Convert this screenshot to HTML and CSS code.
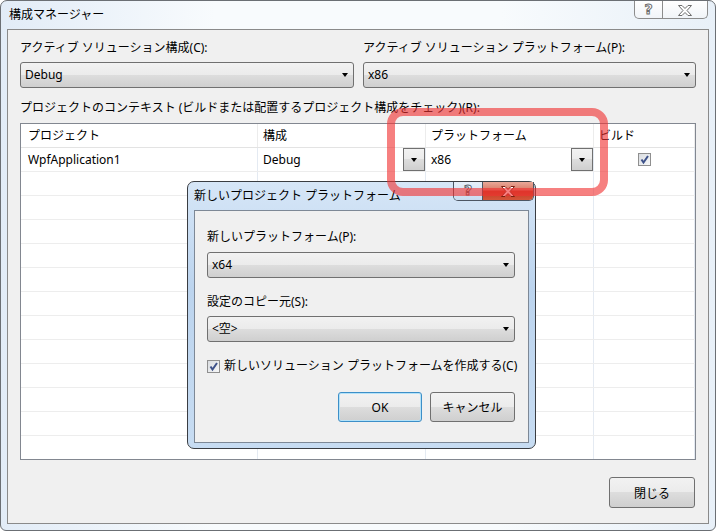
FILE: index.html
```html
<!DOCTYPE html>
<html lang="ja">
<head>
    <meta charset="UTF-8">
    <title>構成マネージャー</title>
    <link rel="stylesheet" href="styles.css">
</head>
<body>
    <div class="window">
        <div class="titlebar">
            <span class="title">構成マネージャー</span>
            <div class="caption">
                <div class="cap-help">?</div>
                <div class="cap-close">
                    <svg width="14" height="11" viewBox="0 0 14 11"><polygon points="0.5,0.5 4,0.5 7,3.5 10,0.5 13.5,0.5 9,5.5 13.5,10.5 10,10.5 7,7.5 4,10.5 0.5,10.5 5,5.5" fill="#fff" stroke="#6d6d6d" stroke-width="1"/></svg>
                </div>
            </div>
        </div>

        <div class="client">
            <div class="top-row">
                <div class="field">
                    <div class="label">アクティブ ソリューション構成(C):</div>
                    <div class="combo">Debug</div>
                </div>
                <div class="field">
                    <div class="label">アクティブ ソリューション プラットフォーム(P):</div>
                    <div class="combo">x86</div>
                </div>
            </div>

            <div class="context-label">プロジェクトのコンテキスト (ビルドまたは配置するプロジェクト構成をチェック)(R):</div>

            <div class="grid">
                <div class="grid-row head">
                    <div class="cell first">プロジェクト</div>
                    <div class="cell">構成</div>
                    <div class="cell">プラットフォーム</div>
                    <div class="cell">ビルド</div>
                </div>
                <div class="grid-row">
                    <div class="cell first">WpfApplication1</div>
                    <div class="cell">Debug<span class="cell-drop"></span></div>
                    <div class="cell">x86<span class="cell-drop"></span></div>
                    <div class="cell center">
                        <span class="check"><svg width="11" height="11" viewBox="0 0 11 11"><path d="M2.5 5.5 L4.5 8.5 L9 2" fill="none" stroke="#3d5189" stroke-width="2"/></svg></span>
                    </div>
                </div>
                <div class="grid-row"><div class="cell first"></div><div class="cell"></div><div class="cell"></div><div class="cell"></div></div>
                <div class="grid-row"><div class="cell first"></div><div class="cell"></div><div class="cell"></div><div class="cell"></div></div>
                <div class="grid-row"><div class="cell first"></div><div class="cell"></div><div class="cell"></div><div class="cell"></div></div>
                <div class="grid-row"><div class="cell first"></div><div class="cell"></div><div class="cell"></div><div class="cell"></div></div>
                <div class="grid-row"><div class="cell first"></div><div class="cell"></div><div class="cell"></div><div class="cell"></div></div>
                <div class="grid-row"><div class="cell first"></div><div class="cell"></div><div class="cell"></div><div class="cell"></div></div>
                <div class="grid-row"><div class="cell first"></div><div class="cell"></div><div class="cell"></div><div class="cell"></div></div>
                <div class="grid-row"><div class="cell first"></div><div class="cell"></div><div class="cell"></div><div class="cell"></div></div>
                <div class="grid-row"><div class="cell first"></div><div class="cell"></div><div class="cell"></div><div class="cell"></div></div>
                <div class="grid-row"><div class="cell first"></div><div class="cell"></div><div class="cell"></div><div class="cell"></div></div>
                <div class="grid-row"><div class="cell first"></div><div class="cell"></div><div class="cell"></div><div class="cell"></div></div>
                <div class="grid-row"><div class="cell first"></div><div class="cell"></div><div class="cell"></div><div class="cell"></div></div>
            </div>

            <div class="footer">
                <button class="btn close-btn">閉じる</button>
            </div>
        </div>

        <div class="dialog">
            <div class="dlg-titlebar">新しいプロジェクト プラットフォーム</div>
            <div class="dlg-caption">
                <div class="dlg-help">?</div>
                <div class="dlg-close">
                    <svg width="14" height="11" viewBox="0 0 14 11"><polygon points="0.5,0.5 4,0.5 7,3.5 10,0.5 13.5,0.5 9,5.5 13.5,10.5 10,10.5 7,7.5 4,10.5 0.5,10.5 5,5.5" fill="#fff" stroke="#7a2010" stroke-width="1"/></svg>
                </div>
            </div>
            <div class="dlg-client">
                <div class="label">新しいプラットフォーム(P):</div>
                <div class="combo">x64</div>
                <div class="label spaced">設定のコピー元(S):</div>
                <div class="combo">&lt;空&gt;</div>
                <div class="check-row">
                    <span class="check"><svg width="11" height="11" viewBox="0 0 11 11"><path d="M2.5 5.5 L4.5 8.5 L9 2" fill="none" stroke="#3d5189" stroke-width="2"/></svg></span>
                    <span>新しいソリューション プラットフォームを作成する(C)</span>
                </div>
                <div class="dlg-buttons">
                    <button class="btn default">OK</button>
                    <button class="btn">キャンセル</button>
                </div>
            </div>
        </div>

        <div class="highlight"></div>
    </div>
</body>
</html>
```

FILE: styles.css
```css
* {
    margin: 0;
    padding: 0;
    box-sizing: border-box;
}

body {
    width: 716px;
    height: 531px;
    overflow: hidden;
    background: #fff;
    font-family: "Noto Sans", "Noto Sans CJK JP", sans-serif;
    font-size: 12px;
    line-height: 16px;
    color: #000;
}

.window {
    position: relative;
    display: flex;
    flex-direction: column;
    width: 716px;
    height: 531px;
    padding: 0 6px 6px 6px;
    border: 1px solid #6b6f74;
    border-radius: 7px 7px 6px 6px;
    background: linear-gradient(90deg, #e2ecf7, #f8fbfd 30%, #f8fbfd 70%, #e8f0f8);
}

.titlebar {
    display: flex;
    justify-content: space-between;
    align-items: flex-start;
    height: 28px;
    padding-left: 2px;
}

.title {
    line-height: 28px;
}

.caption {
    display: flex;
    height: 18px;
    margin-right: 1px;
    border: 1px solid #8c8c8c;
    border-top: none;
    border-radius: 0 0 5px 5px;
    background: linear-gradient(#ffffff, #f1f4f8);
}

.cap-help {
    width: 28px;
    border-right: 1px solid #8c8c8c;
    text-align: center;
    font-family: "DejaVu Sans", sans-serif;
    font-weight: bold;
    font-size: 14px;
    line-height: 16px;
    color: #fff;
    -webkit-text-stroke: 1px #6d6d6d;
}

.cap-close {
    display: flex;
    align-items: center;
    justify-content: center;
    width: 44px;
    padding-top: 1px;
}

.client {
    flex: 1;
    padding: 10px 12px 14px 12px;
    border: 1px solid #8a8a8a;
    background: #f0f0f0;
}

.top-row {
    display: grid;
    grid-template-columns: 334px 333px;
    column-gap: 9px;
}

.combo {
    display: flex;
    align-items: center;
    justify-content: space-between;
    height: 26px;
    margin-top: 6px;
    padding: 0 5px 0 4px;
    border: 1px solid #707070;
    border-radius: 3px;
    background: linear-gradient(#f2f2f2 0%, #ebebeb 50%, #dddddd 50%, #cfcfcf 100%);
}

.combo::after {
    content: "";
    border-left: 3px solid transparent;
    border-right: 3px solid transparent;
    border-top: 4px solid #000;
}

.context-label {
    margin-top: 12px;
    white-space: nowrap;
}

.grid {
    height: 337px;
    margin-top: 7px;
    overflow: hidden;
    border: 1px solid #828790;
    background: #fff;
}

.grid-row {
    display: grid;
    grid-template-columns: 237px 168px 168px 1fr;
    height: 24px;
    border-bottom: 1px solid #ededed;
}

.grid-row.head {
    border-bottom-color: #e3e3e3;
}

.cell {
    display: flex;
    align-items: center;
    padding-left: 5px;
    border-right: 1px solid #e4eaf2;
}

.cell.first {
    padding-left: 7px;
}

.grid-row.head .cell {
    border-right-color: #ececec;
}

.cell.center {
    justify-content: center;
    padding-left: 0;
}

.cell-drop {
    display: flex;
    align-items: center;
    justify-content: center;
    width: 22px;
    height: 23px;
    margin-left: auto;
    border: 1px solid #707070;
    background: linear-gradient(#f2f2f2 0%, #ebebeb 50%, #dddddd 50%, #cfcfcf 100%);
}

.cell-drop::after {
    content: "";
    border-left: 3px solid transparent;
    border-right: 3px solid transparent;
    border-top: 4px solid #000;
}

.check {
    display: flex;
    flex-shrink: 0;
    align-items: center;
    justify-content: center;
    width: 13px;
    height: 13px;
    border: 1px solid #8f8f8f;
    background: linear-gradient(135deg, #d9dce0, #f6f7f8);
}

.footer {
    display: flex;
    justify-content: flex-end;
    margin-top: 17px;
    padding-right: 1px;
}

.btn {
    height: 30px;
    width: 85px;
    border: 1px solid #707070;
    border-radius: 3px;
    background: linear-gradient(#f2f2f2 0%, #ebebeb 50%, #dddddd 50%, #cfcfcf 100%);
    font-family: inherit;
    font-size: 12px;
    color: #000;
}

.close-btn {
    width: 86px;
    height: 31px;
}

.btn.default {
    width: 84px;
    border-color: #3c8fc8;
    box-shadow: inset 0 0 0 1px #b4e2f8;
}

.dialog {
    position: absolute;
    left: 186px;
    top: 180px;
    display: flex;
    flex-direction: column;
    width: 349px;
    height: 268px;
    padding: 0 6px 5px 6px;
    border: 1px solid #3a3d42;
    border-radius: 7px;
    background: linear-gradient(#d6e6f7, #bcd4ee 40%, #c7dcf2);
}

.dlg-titlebar {
    height: 28px;
    line-height: 28px;
}

.dlg-caption {
    position: absolute;
    top: 0;
    right: 1px;
    display: flex;
    height: 19px;
    border: 1px solid #4d5663;
    border-top: none;
    border-radius: 0 0 5px 5px;
    overflow: hidden;
}

.dlg-help {
    width: 29px;
    border-right: 1px solid #4d5663;
    background: linear-gradient(#e6eff9, #c9dcf1);
    text-align: center;
    font-family: "DejaVu Sans", sans-serif;
    font-weight: bold;
    font-size: 14px;
    line-height: 17px;
    color: #fff;
    -webkit-text-stroke: 1px #5b6470;
}

.dlg-close {
    display: flex;
    align-items: center;
    justify-content: center;
    width: 50px;
    background: linear-gradient(#e9a898 0%, #d87a66 45%, #c3391f 50%, #d4553a 100%);
}

.dlg-client {
    flex: 1;
    padding: 18px 13px 0 12px;
    border: 1px solid #7d8896;
    background: #f0f0f0;
}

.dlg-client .combo {
    margin-top: 7px;
}

.label.spaced {
    margin-top: 16px;
}

.dlg-client .label.spaced + .combo {
    margin-top: 6px;
}

.check-row {
    display: flex;
    align-items: center;
    gap: 4px;
    margin-top: 16px;
    white-space: nowrap;
}

.dlg-buttons {
    display: flex;
    justify-content: flex-end;
    gap: 8px;
    margin-top: 18px;
}

.highlight {
    position: absolute;
    left: 386px;
    top: 107px;
    width: 221px;
    height: 88px;
    border: 8px solid rgba(240, 50, 50, 0.62);
    border-radius: 16px;
}
```
